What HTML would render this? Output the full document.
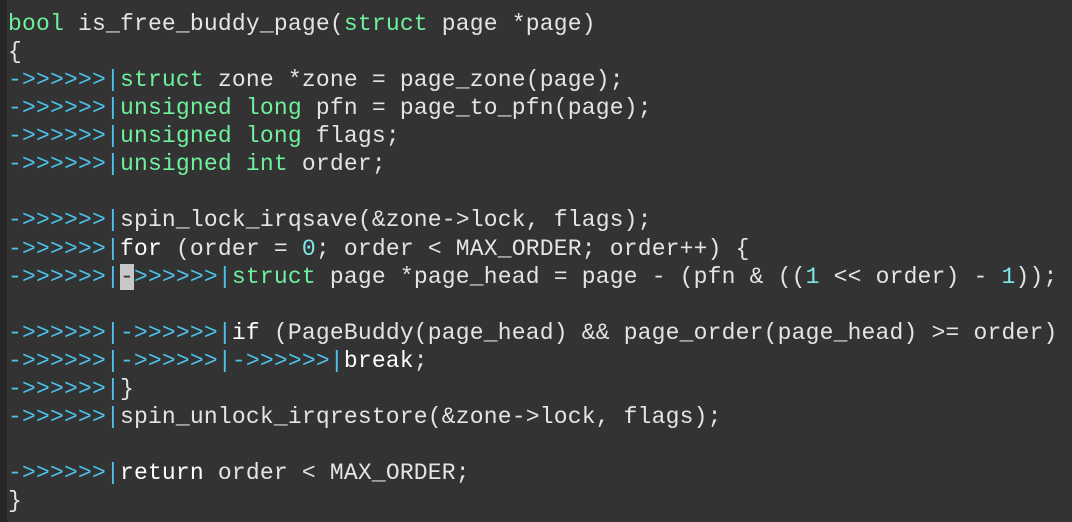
<!DOCTYPE html>
<html><head><style>
html,body{margin:0;padding:0;width:1072px;height:522px;overflow:hidden;background:#333333;}
.g{position:absolute;left:0;top:0;width:7px;height:522px;background:#262626;}
pre{position:absolute;left:8px;top:10px;margin:0;font-family:"Liberation Mono",monospace;font-size:23px;letter-spacing:0.19px;line-height:28.06px;color:#e4e4e2;}
.k{color:#6ff09c}.t{color:#4cc3ec}.n{color:#80e8ea}.w{color:#ffffff}
.c{background:#c8c8c8;color:#333}
</style></head><body><div class="g"></div>
<pre><span class="k">bool</span> is_free_buddy_page(<span class="k">struct</span> page *page)
{
<span class="t">->>>>>>|</span><span class="k">struct</span> zone *zone = page_zone(page);
<span class="t">->>>>>>|</span><span class="k">unsigned</span> <span class="k">long</span> pfn = page_to_pfn(page);
<span class="t">->>>>>>|</span><span class="k">unsigned</span> <span class="k">long</span> flags;
<span class="t">->>>>>>|</span><span class="k">unsigned</span> <span class="k">int</span> order;

<span class="t">->>>>>>|</span>spin_lock_irqsave(&amp;zone->lock, flags);
<span class="t">->>>>>>|</span><span class="w">for</span> (order = <span class="n">0</span>; order &lt; MAX_ORDER; order++) {
<span class="t">->>>>>>|</span><span class="c">-</span><span class="t">>>>>>>|</span><span class="k">struct</span> page *page_head = page - (pfn &amp; ((<span class="n">1</span> &lt;&lt; order) - <span class="n">1</span>));

<span class="t">->>>>>>|->>>>>>|</span><span class="w">if</span> (PageBuddy(page_head) &amp;&amp; page_order(page_head) >= order)
<span class="t">->>>>>>|->>>>>>|->>>>>>|</span><span class="w">break</span>;
<span class="t">->>>>>>|</span>}
<span class="t">->>>>>>|</span>spin_unlock_irqrestore(&amp;zone->lock, flags);

<span class="t">->>>>>>|</span><span class="w">return</span> order &lt; MAX_ORDER;
}</pre>
</body></html>
